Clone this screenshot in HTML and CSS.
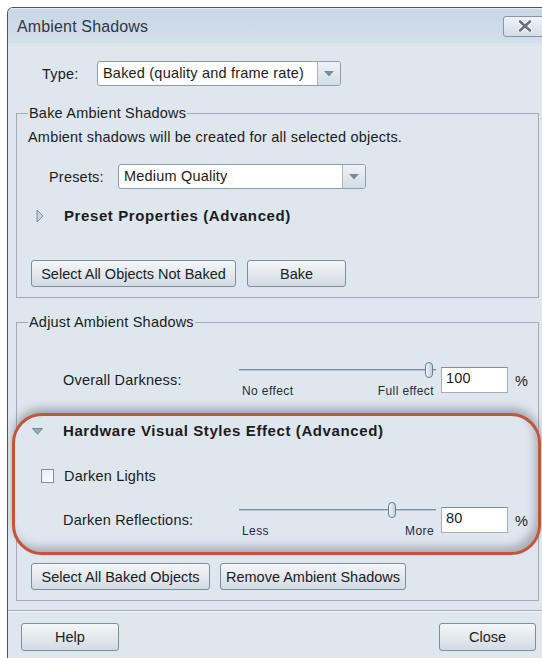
FILE: index.html
```html
<!DOCTYPE html>
<html lang="en">
<head>
<meta charset="utf-8">
<title>Ambient Shadows</title>
<link rel="stylesheet" href="styles.css">
</head>
<body>
<div class="window">
  <div class="titlebar">
    <span class="title">Ambient Shadows</span>
    <button class="close-btn" aria-label="Close">
      <svg width="16" height="12" viewBox="0 0 16 12"><path d="M3 1.5 L13 10.5 M13 1.5 L3 10.5" stroke="#fff" stroke-width="4.4" stroke-linecap="round"/><path d="M3 1.5 L13 10.5 M13 1.5 L3 10.5" stroke="#66727f" stroke-width="2.6" stroke-linecap="round"/></svg>
    </button>
  </div>

  <div class="type-row">
    <span class="type-label">Type:</span>
    <div class="combo combo-type">
      <span class="combo-value">Baked (quality and frame rate)</span>
      <span class="combo-arrow"><svg width="10" height="6" viewBox="0 0 10 6"><polygon points="0,0 10,0 5,5.5" fill="#7b8b9d"/></svg></span>
    </div>
  </div>

  <fieldset class="group bake-group">
    <legend>Bake Ambient Shadows</legend>
    <p class="desc">Ambient shadows will be created for all selected objects.</p>
    <div class="presets-row">
      <span class="presets-label">Presets:</span>
      <div class="combo combo-presets">
        <span class="combo-value">Medium Quality</span>
        <span class="combo-arrow"><svg width="10" height="6" viewBox="0 0 10 6"><polygon points="0,0 10,0 5,5.5" fill="#7b8b9d"/></svg></span>
      </div>
    </div>
    <div class="disclosure collapsed">
      <span class="disc-icon"><svg width="8" height="14" viewBox="0 0 8 14"><polygon points="1,1 7,7 1,13" fill="#c9d3de" stroke="#7489a0" stroke-width="1"/></svg></span>
      <span class="disc-text">Preset Properties (Advanced)</span>
    </div>
    <div class="btn-row">
      <button class="btn btn-not-baked">Select All Objects Not Baked</button>
      <button class="btn btn-bake">Bake</button>
    </div>
  </fieldset>

  <fieldset class="group adjust-group">
    <legend>Adjust Ambient Shadows</legend>
    <div class="slider-row">
      <span class="row-label">Overall Darkness:</span>
      <div class="slider">
        <div class="track"><div class="rail"><span class="thumb" style="left:100%"></span></div></div>
        <div class="ends"><span>No effect</span><span>Full effect</span></div>
      </div>
      <div class="num-box">100</div>
      <span class="unit">%</span>
    </div>

    <div class="callout">
      <div class="disclosure expanded">
        <span class="disc-icon"><svg width="11" height="7" viewBox="0 0 11 7"><polygon points="0.5,0.5 10.5,0.5 5.5,6.2" fill="#9aabbd" stroke="#71859a" stroke-width="1"/></svg></span>
        <span class="disc-text">Hardware Visual Styles Effect (Advanced)</span>
      </div>
      <label class="check-row"><span class="checkbox"></span>Darken Lights</label>
      <div class="slider-row slider-row-tight">
        <span class="row-label">Darken Reflections:</span>
        <div class="slider">
          <div class="track"><div class="rail"><span class="thumb" style="left:80%"></span></div></div>
          <div class="ends"><span>Less</span><span>More</span></div>
        </div>
        <div class="num-box">80</div>
        <span class="unit">%</span>
      </div>
    </div>

    <div class="btn-row btn-row-adjust">
      <button class="btn btn-select-baked">Select All Baked Objects</button>
      <button class="btn btn-remove">Remove Ambient Shadows</button>
    </div>
  </fieldset>

  <div class="separator"></div>

  <div class="footer">
    <button class="btn btn-help">Help</button>
    <button class="btn btn-close">Close</button>
  </div>
</div>
</body>
</html>
```

FILE: styles.css
```css
html, body {
  margin: 0;
  padding: 0;
  background: #ffffff;
  overflow: hidden;
  height: 658px;
}

body {
  font-family: "Liberation Sans", Arial, sans-serif;
  font-size: 14.5px;
  letter-spacing: 0.2px;
  color: #1c1c1c;
}

.window {
  margin: 7px 0 0 7px;
  width: 556px;
  height: 680px;
  box-sizing: border-box;
  border: 1px solid #4f555c;
  border-bottom: none;
  border-radius: 6px 6px 0 0;
  background: #dee6ee;
  overflow: hidden;
}

/* title bar */
.titlebar {
  height: 35px;
  display: flex;
  align-items: center;
  justify-content: space-between;
  background: linear-gradient(#c8d6e5, #d3dfea);
  box-shadow: inset 0 1px 0 #e4ecf4;
}

.title {
  padding: 2px 0 0 9px;
  font-size: 16px;
  letter-spacing: 0.15px;
  line-height: 18px;
  color: #2f3842;
}

.close-btn {
  width: 44px;
  height: 21px;
  margin: 1px 15px 0 0;
  padding: 0;
  border: 1px solid #8696a8;
  border-radius: 3px;
  background: linear-gradient(#eef3f8, #d4dee8);
  display: flex;
  align-items: center;
  justify-content: center;
}

/* combo boxes */
.combo {
  display: flex;
  height: 25px;
  box-sizing: border-box;
  border: 1px solid #8e9dac;
  border-radius: 3px;
  background: #ffffff;
  overflow: hidden;
}

.combo-value {
  flex: 1;
  padding-left: 5px;
  line-height: 23px;
  white-space: nowrap;
}

.combo-arrow {
  width: 22px;
  border-left: 1px solid #aab6c2;
  background: linear-gradient(#eff3f7, #d3dce5);
  display: flex;
  align-items: center;
  justify-content: center;
}

.type-row {
  display: flex;
  align-items: center;
  margin-top: 18px;
  padding-left: 34px;
}

.type-label {
  width: 55px;
}

.combo-type {
  width: 244px;
}

/* group frames */
.group {
  width: 523px;
  box-sizing: border-box;
  margin: 19px 0 0 8px;
  padding: 8px 11px 10px 11px;
  border: 1px solid #a3acb6;
  min-width: 0;
}

.group legend {
  padding: 0 1px;
  line-height: 16px;
}

.adjust-group {
  margin-top: 16px;
}

.desc {
  margin: 0;
  line-height: 17px;
}

.presets-row {
  display: flex;
  align-items: center;
  margin-top: 18px;
  padding-left: 21px;
}

.presets-label {
  width: 69px;
}

.combo-presets {
  width: 248px;
}

/* disclosure headers */
.disclosure {
  display: flex;
  align-items: center;
  font-weight: bold;
  font-size: 15px;
  letter-spacing: 0.6px;
  line-height: 16px;
}

.disclosure.collapsed {
  margin-top: 17px;
  height: 20px;
  padding-left: 8px;
}

.disclosure.collapsed .disc-icon {
  width: 28px;
  display: flex;
}

.disclosure.expanded {
  padding-left: 4px;
}

.disclosure.expanded .disc-icon {
  width: 31px;
  display: flex;
}

/* buttons */
.btn {
  height: 27px;
  box-sizing: border-box;
  padding: 0;
  border: 1px solid #7f8c9a;
  border-radius: 3px;
  background: linear-gradient(#f4f6f9, #e3e9ef 50%, #d2dae3);
  font-family: "Liberation Sans", Arial, sans-serif;
  font-size: 14.5px;
  letter-spacing: 0;
  color: #1c1c1c;
}

.btn-row {
  display: flex;
  gap: 11px;
  margin-top: 34px;
  padding-left: 3px;
}

.btn-not-baked { width: 205px; }
.btn-bake { width: 99px; }

.btn-row-adjust {
  margin-top: 8px;
  gap: 10px;
}

.btn-select-baked { width: 179px; }
.btn-remove { width: 186px; }

/* slider rows */
.slider-row {
  display: grid;
  grid-template-columns: 176px 202px 74px auto;
  align-items: start;
  margin-top: 24px;
  padding-left: 35px;
}

.slider-row-tight {
  margin-top: 18px;
}

.row-label {
  margin-top: 10px;
  line-height: 16px;
}

.slider {
  width: 197px;
}

.track {
  position: relative;
  height: 16px;
}

.track::before {
  content: "";
  position: absolute;
  left: 0;
  right: 0;
  top: 7px;
  height: 1px;
  background: #7f90a4;
  border-bottom: 1px solid #b9c5d1;
}

.rail {
  position: relative;
  width: 186px;
  height: 16px;
}

.thumb {
  position: absolute;
  top: 0;
  width: 8px;
  height: 16px;
  box-sizing: border-box;
  border: 1px solid #6c7e91;
  border-radius: 4px;
  background: linear-gradient(90deg, #f1f4f8, #c4cfdb);
}

.ends {
  display: flex;
  justify-content: space-between;
  margin-top: 6px;
  padding: 0 2px 0 3px;
  font-size: 12px;
  letter-spacing: 0.4px;
  line-height: 14px;
  color: #262b36;
}

.num-box {
  margin-top: 5px;
  width: 67px;
  height: 26px;
  box-sizing: border-box;
  border: 1px solid #a4adb7;
  border-top-color: #858e98;
  background: #ffffff;
  padding: 2px 0 0 4px;
  line-height: 16px;
}

.unit {
  margin-top: 11px;
  line-height: 16px;
}

/* highlighted section */
.callout {
  position: relative;
  margin: 15px -14px 0 -16px;
  padding: 7px 11px 14px 13px;
  border: 3px solid #c4553b;
  border-radius: 30px;
  background: #dee6ee;
  box-shadow: 0 -6px 9px -1px rgba(70, 80, 92, 0.4),
              inset -5px -7px 8px -2px rgba(60, 70, 82, 0.35);
}

.check-row {
  display: flex;
  align-items: center;
  margin-top: 29px;
  padding-left: 13px;
  line-height: 16px;
}

.checkbox {
  width: 13px;
  height: 14px;
  box-sizing: border-box;
  margin-right: 10px;
  border: 1px solid #8a8f96;
  background: linear-gradient(135deg, #e8eaec, #ffffff);
}

/* bottom */
.separator {
  margin-top: 9px;
  height: 0;
  border-top: 1px solid #a2acb7;
  border-bottom: 1px solid #f6f8fa;
}

.footer {
  display: flex;
  justify-content: space-between;
  margin-top: 11px;
  padding: 0 26px 0 13px;
}

.btn-help { width: 98px; height: 28px; }
.btn-close { width: 97px; height: 28px; }
```
